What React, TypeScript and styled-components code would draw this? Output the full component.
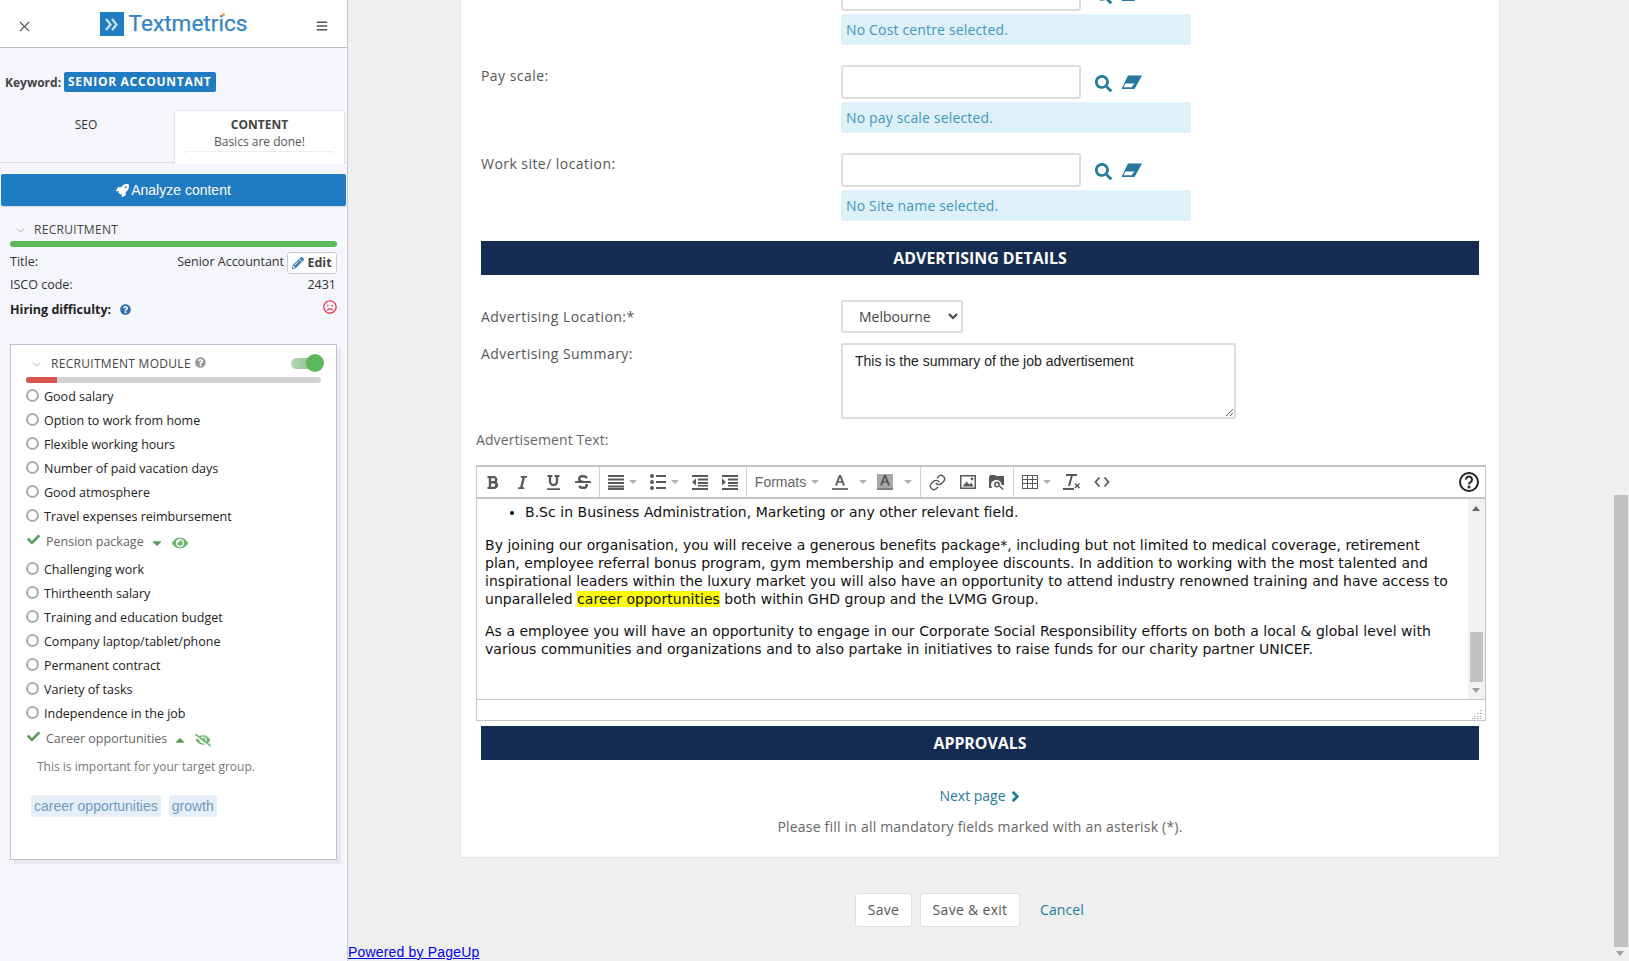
import React from 'react';
import styled, { createGlobalStyle } from 'styled-components';
import {
  FaBars, FaBold, FaCaretDown, FaCaretUp, FaCheck, FaChevronRight, FaEye, FaEyeSlash, FaItalic,
  FaPencilAlt, FaQuestionCircle, FaRegFrown, FaRocket, FaSearch, FaStrikethrough, FaUnderline,
} from 'react-icons/fa';
import { ChevronDown, Link as LinkIcon, X } from 'lucide-react';

const Global = createGlobalStyle`
  html, body { margin: 0; padding: 0; height: 961px; overflow: hidden; background: #efefef; }
  body { font-family: "Open Sans", sans-serif; }
  * { box-sizing: border-box; }
`;

const Page = styled.div`display: flex; width: 1629px; height: 961px; overflow: hidden; background: #efefef;`;

/* ---- sidebar ---- */
const Sidebar = styled.aside`
  width: 348px; flex: none; height: 961px; background: #f4f6fb; border-right: 1px solid #c9c9c9;
  color: #333; font-size: 12.5px;
`;
const TopBar = styled.header`
  height: 48px; background: #fff; border-bottom: 1px solid #bdbdbd; display: flex;
  align-items: center; justify-content: space-between; padding: 5px 19px 0 16px; color: #555;
`;
const Logo = styled.div`display: flex; align-items: center; gap: 5px; position: relative; margin: -4px 0 0 -2px;`;
const LogoMark = styled.div`
  width: 24px; height: 24px; background: #217dc4; display: flex; align-items: center; justify-content: center;
`;
const LogoText = styled.span`
  font-family: Roboto, sans-serif; font-size: 22.6px; color: #3585c4; line-height: 24px; -webkit-text-stroke: 0.25px #3585c4;
`;
const LogoDot = styled.i`
  position: absolute; left: 122px; top: 1px; width: 3px; height: 3px; border-radius: 50%; background: #f0a51e;
`;
const KeywordRow = styled.div`display: flex; align-items: center; gap: 3px; height: 20px; margin-top: 24px; padding-left: 5px;`;
const KeywordLabel = styled.b`font-size: 12px; color: #444;`;
const KeywordBadge = styled.span`
  background: #1f7bc2; color: #fff; font-weight: 700; font-size: 12px; letter-spacing: 0.7px;
  height: 20px; line-height: 20px; padding: 0 4px; border-radius: 2px; white-space: nowrap;
`;
const Tabs = styled.div`display: flex; height: 53px; margin-top: 18px; border-bottom: 1px solid #ddd;`;
const SeoTab = styled.div`width: 172px; text-align: center; padding-top: 6px; line-height: 18px; font-size: 12px; color: #333;`;
const ContentTab = styled.div`
  width: 171px; margin-left: 2px; height: 54px; background: #fff; border: 1px solid #e2e4e8; border-bottom: 0;
  border-radius: 4px 4px 0 0; text-align: center; padding-top: 5px; color: #555;
`;
const TabTitle = styled.div`font-weight: 700; font-size: 12px; line-height: 18px; color: #444;`;
const TabSub = styled.div`font-size: 12px; line-height: 16px;`;
const TabMeter = styled.div`height: 4px; margin: 1px 10px 0; border: 1px solid #eee; border-bottom: 0; border-radius: 2px;`;
const AnalyzeButton = styled.button`
  display: flex; align-items: center; justify-content: center; gap: 2px; width: 345px; height: 32px; margin: 11px 1px 0;
  border: 0; border-radius: 2px; background: #1f7bc2; color: #fff; font: 14px "Liberation Sans", sans-serif;
  box-shadow: 0 1px 1px rgba(0,0,0,.12);
`;
const Section = styled.section`padding: 0 10px;`;
const SectionHead = styled.div`display: flex; align-items: center; height: 16px; margin-top: 15px; color: #444; font-size: 12px; letter-spacing: 0.3px;`;
const Chevron = styled(ChevronDown)`color: #999; flex: none; margin: 3px 7px 0 4px;`;
const GreenBar = styled.div`height: 6px; margin-top: 4px; border-radius: 3px; background: #5cb85c;`;
const InfoRow = styled.div<{ $h: number; $top?: number }>`
  display: flex; justify-content: space-between; align-items: center; height: ${p => p.$h}px;
  margin-top: ${p => p.$top ?? 0}px; color: #333;
`;
const TitleLabel = styled.span`margin-top: -3px;`;
const Value = styled.div`display: flex; align-items: center; gap: 3px;`;
const ValueText = styled.span`margin-top: -2px;`;
const PlainValue = styled.span`padding-right: 1px;`;
const EditButton = styled.span`
  display: inline-flex; align-items: center; justify-content: center; gap: 3px; width: 50px; height: 22px;
  background: #fff; border: 1px solid #ccc; border-radius: 3px; font-weight: 700; color: #444;
`;
const Hiring = styled.b`display: flex; align-items: center; gap: 9px; color: #222;`;
const Frown = styled(FaRegFrown)`color: #e8394a; margin: -4px 0 0 0;`;
const ModuleCard = styled.div`
  height: 516px; margin-top: 25px; background: #fff; border: 1px solid #bcc4d4; box-shadow: 4px 4px 0 #e7e9ee;
  padding: 9px 15px 0;
`;
const ModuleHead = styled.div`display: flex; align-items: center; height: 18px; color: #444; font-size: 12px; letter-spacing: 0.3px;`;
const ModuleChevron = styled(ChevronDown)`color: #999; margin: 3px 8px 0 4px; flex: none;`;
const HeadHelp = styled(FaQuestionCircle)`color: #999; margin-left: 4px; margin-top: -1px;`;
const Toggle = styled.div`position: relative; width: 33px; height: 18px; margin-left: auto; margin-right: -3px;`;
const ToggleTrack = styled.div`
  position: absolute; left: 0; top: 4px; width: 29px; height: 11px; border-radius: 6px;
  background: linear-gradient(90deg, #b9d6b9, #7cb87c);
`;
const ToggleKnob = styled.div`position: absolute; right: 0; top: 0; width: 18px; height: 18px; border-radius: 50%; background: #5cb85c;`;
const ModuleBar = styled.div`height: 6px; margin-top: 5px; width: 295px; border-radius: 3px; background: #d2d2d2; overflow: hidden;`;
const ModuleFill = styled.div`height: 100%; background: #d9534f;`;
const Items = styled.ul`list-style: none; margin: 1px 0 0; padding: 0;`;
const Item = styled.li`display: flex; align-items: center; height: 24px; font-size: 12.5px; color: #222; gap: 5px;`;
const Radio = styled.i`
  width: 13px; height: 13px; border-radius: 50%; border: 2px solid #aaa; background: #fff; flex: none; margin-top: -2px;
`;
const DoneItem = styled.li`display: flex; align-items: center; height: 29px; padding-bottom: 3px; font-size: 12.5px; color: #666;`;
const DoneCheck = styled(FaCheck)`color: #5a9e5a; flex: none; margin: -3px 6px 0 1px;`;
const Caret = styled.span`display: inline-flex; color: #5a9e5a; margin: 4px 0 0 6px;`;
const EyeMark = styled.span`display: inline-flex; color: #6cb56c; margin: 4px 0 0 8px;`;
const Note = styled.div`margin: 5px 0 0 11px; line-height: 16px; font-size: 12px; color: #777;`;
const TagList = styled.div`display: flex; gap: 8px; margin: 20px 0 0 5px;`;
const Tag = styled.span`
  height: 22px; line-height: 22px; padding: 0 3px; border-radius: 4px; background: #e6eff7; color: #6d9bc3;
  font: 14px/22px "Liberation Sans", sans-serif;
`;

/* ---- main ---- */
const Main = styled.main`flex: 1; min-width: 0; display: flex; flex-direction: column; height: 961px;`;
const Panel = styled.div`
  width: 1040px; height: 858px; margin-left: 112px; background: #fff; border: 1px solid #e0e0e0; border-top: 0;
  padding: 0 20px 0 20px; color: #555; font-size: 14px;
`;
const FieldRow = styled.div<{ $top?: number }>`
  display: grid; grid-template-columns: 360px 1fr; margin-top: ${p => p.$top ?? 0}px;
`;
const FieldLabel = styled.label<{ $pad?: number }>`line-height: 20px; padding-top: ${p => p.$pad ?? 0}px; color: #555; letter-spacing: 0.45px;`;
const InputLine = styled.div`display: flex; align-items: center; gap: 14px; height: 34px;`;
const TextBox = styled.input`
  width: 240px; height: 34px; border: 2px solid #ddd; border-radius: 3px; background: #fff;
`;
const SearchIcon = styled(FaSearch)`color: #1f7a9e; margin-top: 2px;`;
const Lookup = styled.div`display: flex; align-items: center; gap: 9px;`;
const NoticeBox = styled.div`
  width: 350px; height: 31px; margin-top: 3px; line-height: 31px; padding-left: 5px; background: #def1fa;
  color: #3f96c2; border-radius: 2px; font-size: 14px; letter-spacing: 0.16px;
`;
const Banner = styled.h2<{ $top: number }>`
  height: 34px; margin: ${p => p.$top}px 0 0; background: #152c52; color: #fff; text-align: center;
  font-size: 15.9px; font-weight: 700; line-height: 34px;
`;
const SelectBox = styled.select`
  width: 122px; height: 33px; border: 2px solid #ddd; border-radius: 3px; background: #fff; padding-left: 12px;
  font: 14px "Open Sans", sans-serif; color: #444;
`;
const AreaBox = styled.textarea`
  display: block; width: 395px; height: 76px; border: 2px solid #ddd; border-radius: 3px; padding: 8px 12px;
  font: 14px/17px "Liberation Sans", sans-serif; color: #222; background: #fff; resize: both; outline: 0;
`;
const EditorLabel = styled.div`margin: 11px 0 0 -5px; line-height: 20px; color: #666; letter-spacing: 0.1px;`;
const Editor = styled.div`margin: 15px -7px 0 -5px; border: 1px solid #c5c5c5; border-top-width: 2px; background: #fff;`;
const Toolbar = styled.div`display: flex; align-items: center; height: 32px; border-bottom: 2px solid #c4c4c4; color: #595959; padding-right: 6px;`;
const ToolGroup = styled.div<{ $pad: number; $last?: boolean }>`
  display: flex; align-items: center; height: 100%; padding-right: ${p => p.$pad}px;
  border-right: ${p => (p.$last ? '0' : '1px solid #d2d2d2')};
`;
const Tool = styled.span<{ $w: number }>`
  display: inline-flex; align-items: center; justify-content: center; gap: 2px; width: ${p => p.$w}px; height: 100%;
`;
const DownCaret = styled.i<{ $gap?: number }>`
  display: inline-block; width: 0; height: 0; border: 4px solid transparent; border-top-color: #b0b0b0; border-bottom: 0;
  margin-left: ${p => p.$gap ?? 3}px;
`;
const FormatLabel = styled.span`font: 14px "Liberation Sans", sans-serif; color: #666;`;
const HelpSpot = styled.span`margin-left: auto; display: inline-flex;`;
const EditorBody = styled.div`display: flex; height: 201px; border-bottom: 1px solid #c9c9c9;`;
const Document = styled.div`
  flex: 1; min-width: 0; padding: 4px 0 0 8px; font: 14px/18px "DejaVu Sans", Verdana, sans-serif; color: #111; white-space: nowrap; letter-spacing: 0.025px;
  overflow: hidden;
`;
const DocList = styled.ul`margin: 0 0 15px; padding-left: 40px;`;
const DocPara = styled.p`margin: 0 0 14px;`;
const Mark = styled.span`background: #ffff00;`;
const MiniScroll = styled.div`
  position: relative; width: 17px; flex: none; background: #f1f1f1;
`;
const MiniThumb = styled.div`position: absolute; left: 2px; top: 133px; width: 13px; height: 50px; background: #c1c1c1;`;
const ArrowUp = styled.i`
  position: absolute; top: 7px; left: 4px; width: 0; height: 0; border: 4px solid transparent; border-top: 0; border-bottom: 5px solid #666;
`;
const ArrowDown = styled.i`
  position: absolute; bottom: 6px; left: 4px; width: 0; height: 0; border: 4px solid transparent; border-bottom: 0; border-top: 5px solid #a0a0a0;
`;
const StatusBar = styled.div`display: flex; justify-content: flex-end; align-items: flex-end; height: 20px; padding: 0 3px 1px 0;`;
const NextLine = styled.div`margin-top: 26px; text-align: center; line-height: 20px; color: #1f7a9e; display: flex; justify-content: center; align-items: center; gap: 4px;`;
const NextArrow = styled(FaChevronRight)`stroke: currentColor; stroke-width: 50px;`;
const Mandatory = styled.div`margin-top: 11px; text-align: center; line-height: 20px; color: #666; letter-spacing: 0.2px;`;
const Actions = styled.div`display: flex; align-items: center; gap: 8px; margin-top: 35px; padding-left: 507px; height: 34px;`;
const PlainButton = styled.button<{ $w: number }>`
  width: ${p => p.$w}px; height: 34px; padding: 0 0 2px; background: #fff; border: 1px solid #e0e0e0; border-radius: 3px;
  font: 14px "Open Sans", sans-serif; color: #555; letter-spacing: 0.3px;
`;
const CancelLink = styled.a`margin: -2px 0 0 12px; font-size: 14px; color: #1f7a9e; letter-spacing: 0.1px;`;
const Powered = styled.a`
  margin-top: 17px; font: 14px/16px "Liberation Sans", sans-serif; color: #0000ee; text-decoration: underline; align-self: flex-start; letter-spacing: 0.18px;
`;
const PageScroll = styled.div`position: relative; width: 17px; flex: none; background: #f0f0f0;`;
const PageThumb = styled.div`position: absolute; left: 2px; top: 495px; width: 14px; height: 452px; background: #c1c1c1;`;
const PageArrow = styled.i`
  position: absolute; bottom: 5px; left: 4px; width: 0; height: 0; border: 4px solid transparent; border-bottom: 0; border-top: 5px solid #a0a0a0;
`;

/* ---- drawn icons ---- */
const Svg: React.FC<{ w?: number; h?: number; children: React.ReactNode }> = ({ w = 16, h = 16, children }) => (
  <svg width={w} height={h} viewBox={`0 0 ${w} ${h}`} fill="currentColor">{children}</svg>
);
const IconAlign = () => (
  <Svg><rect y="1" width="16" height="2" /><rect y="4.5" width="16" height="2" /><rect y="8" width="16" height="2" /><rect y="11.5" width="16" height="2" /><rect y="14" width="16" height="2" /></Svg>
);
const IconList = () => (
  <Svg><circle cx="2" cy="2" r="2" /><circle cx="2" cy="8" r="2" /><circle cx="2" cy="14" r="2" /><rect x="6" y="1" width="10" height="2" /><rect x="6" y="7" width="10" height="2" /><rect x="6" y="13" width="10" height="2" /></Svg>
);
const IconOutdent = () => (
  <Svg><rect width="16" height="2" y="1" /><rect x="6" y="4.5" width="10" height="2" /><rect x="6" y="8" width="10" height="2" /><rect x="6" y="11" width="10" height="1.5" /><rect y="14" width="16" height="2" /><path d="M0 8l4-3.5v7z" /></Svg>
);
const IconIndent = () => (
  <Svg><rect width="16" height="2" y="1" /><rect x="6" y="4.5" width="10" height="2" /><rect x="6" y="8" width="10" height="2" /><rect x="6" y="11" width="10" height="1.5" /><rect y="14" width="16" height="2" /><path d="M4 8L0 4.500v7z" /></Svg>
);
const IconColor: React.FC<{ $fill?: boolean }> = ({ $fill }) => (
  <Svg>
    {$fill && <rect width="16" height="16" fill="#a9a9a9" />}
    <path d="M7 1h2l4 10.500h-2l-1-2.800H6l-1 2.800H3zM6.600 7.200h2.800L8 3.400z" fill={$fill ? '#555' : 'currentColor'} />
    <rect y="14" width="16" height="2" fill={$fill ? '#808080' : '#777'} />
  </Svg>
);
const IconImage = () => (
  <Svg><path fillRule="evenodd" d="M0 1h16v14H0zM1.500 2.500v11h13v-11z" /><path d="M2.500 12.500l4-5 3 3 2-2 2 4z" /><circle cx="12" cy="5" r="1.400" /></Svg>
);
const IconMedia = () => (
  <Svg><path d="M0 3l1-2h5l1 1h8v3H0z" /><path fillRule="evenodd" d="M0 5h15v6h-2.500a5 5 0 0 0-5-5 5 5 0 0 0-4.500 8H0zM8 7.500a3 3 0 1 1 0 6 3 3 0 0 1 0-6zM8 9a1.500 1.500 0 1 0 0 3 1.500 1.500 0 0 0 0-3z" /><path d="M10 12.500l1-1 3.500 3.500-1 1z" /></Svg>
);
const IconTable = () => (
  <Svg><path fillRule="evenodd" d="M0 1h16v14H0zM1 2v3h4V2zM6 2v3h4V2zM11 2v3h4V2zM1 6v3h4V6zM6 6v3h4V6zM11 6v3h4V6zM1 10v4h4v-4zM6 10v4h4v-4zM11 10v4h4v-4z" /></Svg>
);
const IconClear = () => (
  <Svg w={18} h={18}><path d="M3 1h11v2h-4.200L7 13H5L7.800 3H3z" /><rect x="0" y="15" width="11" height="2" /><path d="M11.500 11l1-1 1.800 1.800L16 10l1 1-1.800 1.800L17 14.600l-1 1-1.800-1.800-1.800 1.800-1-1 1.800-1.800z" /></Svg>
);
const IconCode = () => (
  <svg width="16" height="16" viewBox="0 0 16 16" fill="none" stroke="currentColor" strokeWidth="1.800"><path d="M5.500 3.500L1.500 8l4 4.500M10.500 3.500l4 4.500-4 4.500" /></svg>
);
const IconHelp = () => (
  <svg width="20" height="20" viewBox="0 0 20 20" fill="none" stroke="#222" strokeWidth="2">
    <circle cx="10" cy="10" r="9" />
    <path d="M7 7.500a3 3 0 1 1 4.500 2.600c-1 .6-1.500 1.100-1.500 2.400" />
    <circle cx="10" cy="15" r=".6" fill="#222" />
  </svg>
);
const IconEraser = () => (
  <svg width="21" height="15" viewBox="0 0 21 15">
    <path d="M7 .5h14L13.500 14H.5z" fill="#25789f" />
    <path d="M4.500 8.500h8.700l-2.600 3.800H2.500z" fill="#fff" />
  </svg>
);
const IconResize = () => (
  <svg width="10" height="9" viewBox="0 0 10 9" fill="#aaa">
    {[[8, 0], [5, 3], [8, 3], [2, 6], [5, 6], [8, 6], [0, 8], [2, 8], [5, 8], [8, 8]].map(([x, y]) => (
      <rect key={`${x}-${y}`} x={x} y={y} width="1.500" height="1" />
    ))}
  </svg>
);
const IconChevrons = () => (
  <svg width="15" height="15" viewBox="0 0 15 15" fill="none" stroke="#cfe4f5" strokeWidth="2.200"><path d="M2 2l4.500 5.500L2 13M8 2l4.500 5.500L8 13" /></svg>
);

const plainItems1 = ['Good salary', 'Option to work from home', 'Flexible working hours', 'Number of paid vacation days', 'Good atmosphere', 'Travel expenses reimbursement'];
const plainItems2 = ['Challenging work', 'Thirtheenth salary', 'Training and education budget', 'Company laptop/tablet/phone', 'Permanent contract', 'Variety of tasks', 'Independence in the job'];

const Lookupfield: React.FC<{ msg: string }> = ({ msg }) => (
  <div>
    <InputLine>
      <TextBox readOnly />
      <Lookup><SearchIcon size={17} /><IconEraser /></Lookup>
    </InputLine>
    <NoticeBox>{msg}</NoticeBox>
  </div>
);

export default function App() {
  return (
    <Page>
      <Global />
      <Sidebar>
        <TopBar>
          <X size={17} strokeWidth={1.5} />
          <Logo>
            <LogoMark><IconChevrons /></LogoMark>
            <LogoText>Textmetrics</LogoText>
            <LogoDot />
          </Logo>
          <FaBars size={12} />
        </TopBar>
        <KeywordRow>
          <KeywordLabel>Keyword:</KeywordLabel>
          <KeywordBadge>SENIOR ACCOUNTANT</KeywordBadge>
        </KeywordRow>
        <Tabs>
          <SeoTab>SEO</SeoTab>
          <ContentTab>
            <TabTitle>CONTENT</TabTitle>
            <TabSub>Basics are done!</TabSub>
            <TabMeter />
          </ContentTab>
        </Tabs>
        <AnalyzeButton><FaRocket size={13} />Analyze content</AnalyzeButton>
        <Section>
          <SectionHead><Chevron size={13} strokeWidth={1.5} />RECRUITMENT</SectionHead>
          <GreenBar />
          <InfoRow $h={21} $top={5}>
            <TitleLabel>Title:</TitleLabel>
            <Value><ValueText>Senior Accountant</ValueText><EditButton><FaPencilAlt size={12} color="#3b7fb8" />Edit</EditButton></Value>
          </InfoRow>
          <InfoRow $h={20} $top={1}><span>ISCO code:</span><PlainValue>2431</PlainValue></InfoRow>
          <InfoRow $h={20} $top={5}>
            <Hiring>Hiring difficulty: <FaQuestionCircle size={11} color="#2f6fae" /></Hiring>
            <Frown size={14} />
          </InfoRow>
          <ModuleCard>
            <ModuleHead>
              <ModuleChevron size={13} strokeWidth={1.5} />RECRUITMENT MODULE<HeadHelp size={11} />
              <Toggle><ToggleTrack /><ToggleKnob /></Toggle>
            </ModuleHead>
            <ModuleBar><ModuleFill style={{ width: '10.500%' }} /></ModuleBar>
            <Items>
              {plainItems1.map(t => <Item key={t}><Radio />{t}</Item>)}
              <DoneItem>
                <DoneCheck size={13} />Pension package
                <Caret><FaCaretDown size={14} /></Caret>
                <EyeMark><FaEye size={16} /></EyeMark>
              </DoneItem>
              {plainItems2.map(t => <Item key={t}><Radio />{t}</Item>)}
              <DoneItem>
                <DoneCheck size={13} />Career opportunities
                <Caret><FaCaretUp size={14} /></Caret>
                <EyeMark><FaEyeSlash size={16} /></EyeMark>
              </DoneItem>
            </Items>
            <Note>This is important for your target group.</Note>
            <TagList><Tag>career opportunities</Tag><Tag>growth</Tag></TagList>
          </ModuleCard>
        </Section>
      </Sidebar>
      <Main>
        <Panel>
          <FieldRow $top={-23}><FieldLabel /><Lookupfield msg="No Cost centre selected." /></FieldRow>
          <FieldRow $top={20}><FieldLabel $pad={1}>Pay scale:</FieldLabel><Lookupfield msg="No pay scale selected." /></FieldRow>
          <FieldRow $top={20}><FieldLabel $pad={1}>Work site/ location:</FieldLabel><Lookupfield msg="No Site name selected." /></FieldRow>
          <Banner $top={20}>ADVERTISING DETAILS</Banner>
          <FieldRow $top={25}>
            <FieldLabel $pad={7}>Advertising Location:*</FieldLabel>
            <div><SelectBox defaultValue="Melbourne"><option>Melbourne</option></SelectBox></div>
          </FieldRow>
          <FieldRow $top={10}>
            <FieldLabel $pad={1}>Advertising Summary:</FieldLabel>
            <AreaBox readOnly defaultValue="This is the summary of the job advertisement" />
          </FieldRow>
          <EditorLabel>Advertisement Text:</EditorLabel>
          <Editor>
            <Toolbar>
              <ToolGroup $pad={1}>
                <Tool $w={30}><FaBold size={15} /></Tool>
                <Tool $w={31}><FaItalic size={15} /></Tool>
                <Tool $w={30}><FaUnderline size={15} /></Tool>
                <Tool $w={30}><FaStrikethrough size={16} /></Tool>
              </ToolGroup>
              <ToolGroup $pad={1}>
                <Tool $w={44}><IconAlign /><DownCaret /></Tool>
                <Tool $w={41}><IconList /><DownCaret /></Tool>
                <Tool $w={30}><IconOutdent /></Tool>
                <Tool $w={30}><IconIndent /></Tool>
              </ToolGroup>
              <ToolGroup $pad={3}>
                <Tool $w={80}><FormatLabel>Formats</FormatLabel><DownCaret /></Tool>
                <Tool $w={45}><IconColor /><DownCaret $gap={9} /></Tool>
                <Tool $w={45}><IconColor $fill /><DownCaret $gap={9} /></Tool>
              </ToolGroup>
              <ToolGroup $pad={1}>
                <Tool $w={32}><LinkIcon size={17} strokeWidth={2} /></Tool>
                <Tool $w={29}><IconImage /></Tool>
                <Tool $w={30}><IconMedia /></Tool>
              </ToolGroup>
              <ToolGroup $pad={0} $last>
                <Tool $w={45}><IconTable /><DownCaret /></Tool>
                <Tool $w={26}><IconClear /></Tool>
                <Tool $w={34}><IconCode /></Tool>
              </ToolGroup>
              <HelpSpot><IconHelp /></HelpSpot>
            </Toolbar>
            <EditorBody>
              <Document>
                <DocList><li>B.Sc in Business Administration, Marketing or any other relevant field.</li></DocList>
                <DocPara>
                  By joining our organisation, you will receive a generous benefits package*, including but not limited to medical coverage, retirement<br />
                  plan, employee referral bonus program, gym membership and employee discounts. In addition to working with the most talented and<br />
                  inspirational leaders within the luxury market you will also have an opportunity to attend industry renowned training and have access to<br />
                  unparalleled <Mark>career opportunities</Mark> both within GHD group and the LVMG Group.
                </DocPara>
                <DocPara>
                  As a employee you will have an opportunity to engage in our Corporate Social Responsibility efforts on both a local &amp; global level with<br />
                  various communities and organizations and to also partake in initiatives to raise funds for our charity partner UNICEF.
                </DocPara>
              </Document>
              <MiniScroll><ArrowUp /><MiniThumb /><ArrowDown /></MiniScroll>
            </EditorBody>
            <StatusBar><IconResize /></StatusBar>
          </Editor>
          <Banner $top={5}>APPROVALS</Banner>
          <NextLine>Next page <NextArrow size={11} /></NextLine>
          <Mandatory>Please fill in all mandatory fields marked with an asterisk (*).</Mandatory>
        </Panel>
        <Actions>
          <PlainButton $w={57}>Save</PlainButton>
          <PlainButton $w={100}>Save &amp; exit</PlainButton>
          <CancelLink>Cancel</CancelLink>
        </Actions>
        <Powered href="#">Powered by PageUp</Powered>
      </Main>
      <PageScroll><PageThumb /><PageArrow /></PageScroll>
    </Page>
  );
}
